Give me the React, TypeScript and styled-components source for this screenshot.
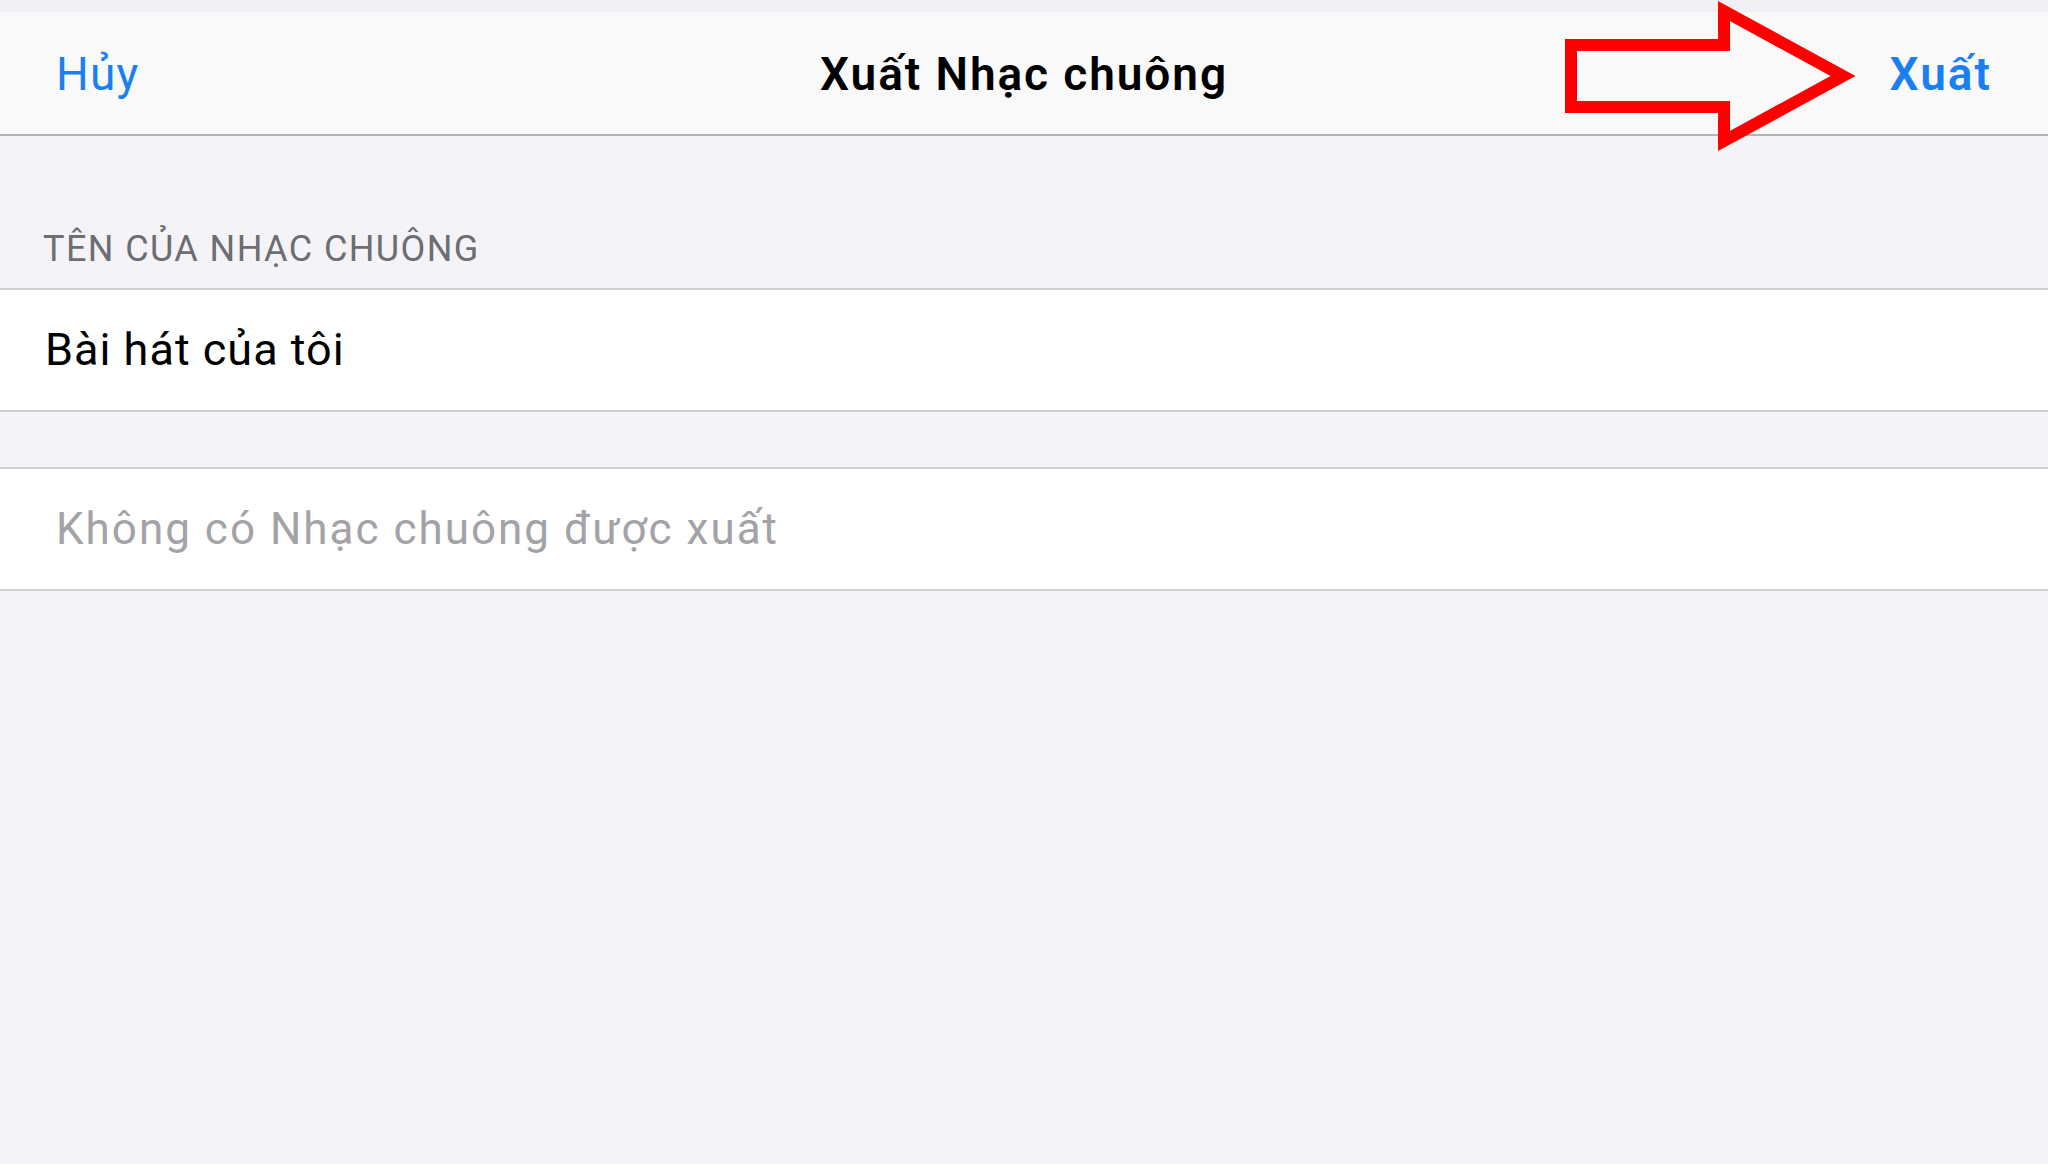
import { FC } from 'react';
import styled, { createGlobalStyle } from 'styled-components';

const GlobalStyle = createGlobalStyle`
    html, body {
        margin: 0;
        padding: 0;
        background: #f4f4f8;
        font-family: Roboto, 'Noto Sans', 'Liberation Sans', sans-serif;
    }
    #root {
        min-height: 100vh;
    }
`;

// the red annotation arrow pointing at the export button
const ExportArrow: FC = () => (
    <ArrowLayer width={2048} height={170} viewBox={'0 0 2048 170'}>
        <polygon
            points={'1571,45 1724,45 1724,11 1843,76 1724,141 1724,107 1571,107'}
            fill={'none'}
            stroke={'#ff0000'}
            strokeWidth={12}
            strokeLinejoin={'miter'}
            strokeMiterlimit={10}
        />
    </ArrowLayer>
);

export const App: FC = () => {
    return (
        <Screen>
            <GlobalStyle />
            <StatusStrip />
            <NavBar>
                <NavButton>Hủy</NavButton>
                <NavTitle>Xuất Nhạc chuông</NavTitle>
                <NavButton $strong>Xuất</NavButton>
            </NavBar>
            <SectionHeader>TÊN CỦA NHẠC CHUÔNG</SectionHeader>
            <Cell>
                <CellText>Bài hát của tôi</CellText>
            </Cell>
            <CellGap />
            <Cell>
                <CellText $placeholder>Không có Nhạc chuông được xuất</CellText>
            </Cell>
            <ExportArrow />
        </Screen>
    );
};

const Screen = styled.div`
    position: relative;
    display: flex;
    flex-direction: column;
    width: 100%;
    min-height: 100vh;
    background: #f4f4f8;
`;

const StatusStrip = styled.div`
    height: 12px;
    background: #f1f1f5;
`;

const NavBar = styled.div`
    display: grid;
    grid-template-columns: 1fr auto 1fr;
    align-items: center;
    height: 124px;
    padding: 2px 56px 0 56px;
    box-sizing: border-box;
    background: #f9f9fa;
    border-bottom: 2px solid #b4b4b6;
`;

const NavButton = styled.div<{ $strong?: boolean }>`
    font-size: 46px;
    line-height: 46px;
    color: #1a7ff2;
    font-weight: ${(p) => (p.$strong ? 600 : 400)};
    letter-spacing: ${(p) => (p.$strong ? 2 : 1.2)}px;
    justify-self: ${(p) => (p.$strong ? 'end' : 'start')};
`;

const NavTitle = styled.div`
    font-size: 46px;
    line-height: 46px;
    font-weight: 600;
    letter-spacing: 1.9px;
    color: #000;
`;

const SectionHeader = styled.div`
    padding: 91px 43px 17px;
    font-size: 36px;
    line-height: 44px;
    letter-spacing: 1.4px;
    color: #6d6d72;
`;

const Cell = styled.div`
    display: flex;
    align-items: center;
    height: 124px;
    box-sizing: border-box;
    background: #ffffff;
    border-top: 2px solid #d0d0d4;
    border-bottom: 2px solid #d0d0d4;
`;

const CellText = styled.div<{ $placeholder?: boolean }>`
    padding-left: ${(p) => (p.$placeholder ? 56 : 45)}px;
    font-size: ${(p) => (p.$placeholder ? 44 : 45)}px;
    line-height: 50px;
    letter-spacing: ${(p) => (p.$placeholder ? 2 : 1)}px;
    color: ${(p) => (p.$placeholder ? '#a3a3a7' : '#000')};
`;

const CellGap = styled.div`
    height: 55px;
`;

const ArrowLayer = styled.svg`
    position: absolute;
    top: 0;
    left: 0;
    pointer-events: none;
`;

export default App;
